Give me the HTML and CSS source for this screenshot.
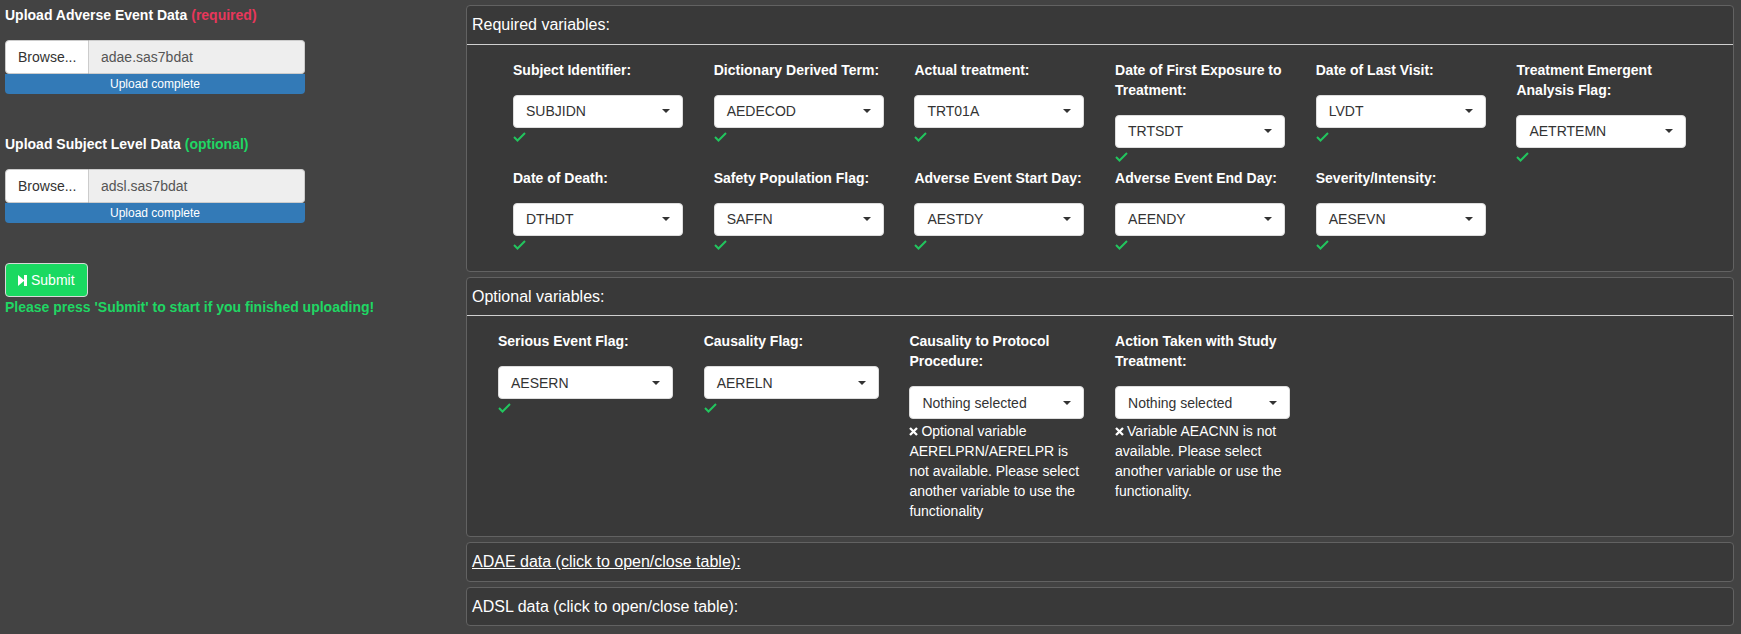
FILE: index.html
```html
<!DOCTYPE html>
<html lang="en">
<head>
<meta charset="utf-8">
<title>Adverse Events Upload</title>
<link rel="stylesheet" href="styles.css">
</head>
<body>
<div class="layout">
  <aside class="sidebar">
    <div class="upload">
      <div class="upload-label">Upload Adverse Event Data <span class="req">(required)</span></div>
      <div class="file-input">
        <span class="browse">Browse...</span>
        <span class="file-name">adae.sas7bdat</span>
      </div>
      <div class="progress">Upload complete</div>
    </div>
    <div class="upload">
      <div class="upload-label">Upload Subject Level Data <span class="opt">(optional)</span></div>
      <div class="file-input">
        <span class="browse">Browse...</span>
        <span class="file-name">adsl.sas7bdat</span>
      </div>
      <div class="progress">Upload complete</div>
    </div>
    <button class="submit" type="button">
      <svg class="step-icon" width="9" height="11" viewBox="0 0 9 11"><polygon points="0,0 6.5,5.5 0,11" fill="#fff"/><rect x="6" y="0" width="3" height="11" fill="#fff"/></svg>
      Submit
    </button>
    <div class="hint">Please press 'Submit' to start if you finished uploading!</div>
  </aside>

  <main class="main">
    <section class="panel">
      <div class="panel-heading lined">Required variables:</div>
      <div class="panel-body req-body">
        <div class="field">
          <div class="field-label">Subject Identifier:</div>
          <div class="select"><span>SUBJIDN</span><i class="caret"></i></div>
          <div class="status"><svg class="check" width="13" height="10" viewBox="0 0 13 10"><polyline points="1,5 4.5,8.5 12,1" fill="none" stroke="#22c55e" stroke-width="2"/></svg></div>
        </div>
        <div class="field">
          <div class="field-label">Dictionary Derived Term:</div>
          <div class="select"><span>AEDECOD</span><i class="caret"></i></div>
          <div class="status"><svg class="check" width="13" height="10" viewBox="0 0 13 10"><polyline points="1,5 4.5,8.5 12,1" fill="none" stroke="#22c55e" stroke-width="2"/></svg></div>
        </div>
        <div class="field">
          <div class="field-label">Actual treatment:</div>
          <div class="select"><span>TRT01A</span><i class="caret"></i></div>
          <div class="status"><svg class="check" width="13" height="10" viewBox="0 0 13 10"><polyline points="1,5 4.5,8.5 12,1" fill="none" stroke="#22c55e" stroke-width="2"/></svg></div>
        </div>
        <div class="field">
          <div class="field-label">Date of First Exposure to Treatment:</div>
          <div class="select"><span>TRTSDT</span><i class="caret"></i></div>
          <div class="status"><svg class="check" width="13" height="10" viewBox="0 0 13 10"><polyline points="1,5 4.5,8.5 12,1" fill="none" stroke="#22c55e" stroke-width="2"/></svg></div>
        </div>
        <div class="field">
          <div class="field-label">Date of Last Visit:</div>
          <div class="select"><span>LVDT</span><i class="caret"></i></div>
          <div class="status"><svg class="check" width="13" height="10" viewBox="0 0 13 10"><polyline points="1,5 4.5,8.5 12,1" fill="none" stroke="#22c55e" stroke-width="2"/></svg></div>
        </div>
        <div class="field">
          <div class="field-label">Treatment Emergent Analysis Flag:</div>
          <div class="select"><span>AETRTEMN</span><i class="caret"></i></div>
          <div class="status"><svg class="check" width="13" height="10" viewBox="0 0 13 10"><polyline points="1,5 4.5,8.5 12,1" fill="none" stroke="#22c55e" stroke-width="2"/></svg></div>
        </div>
        <div class="field">
          <div class="field-label">Date of Death:</div>
          <div class="select"><span>DTHDT</span><i class="caret"></i></div>
          <div class="status"><svg class="check" width="13" height="10" viewBox="0 0 13 10"><polyline points="1,5 4.5,8.5 12,1" fill="none" stroke="#22c55e" stroke-width="2"/></svg></div>
        </div>
        <div class="field">
          <div class="field-label">Safety Population Flag:</div>
          <div class="select"><span>SAFFN</span><i class="caret"></i></div>
          <div class="status"><svg class="check" width="13" height="10" viewBox="0 0 13 10"><polyline points="1,5 4.5,8.5 12,1" fill="none" stroke="#22c55e" stroke-width="2"/></svg></div>
        </div>
        <div class="field">
          <div class="field-label">Adverse Event Start Day:</div>
          <div class="select"><span>AESTDY</span><i class="caret"></i></div>
          <div class="status"><svg class="check" width="13" height="10" viewBox="0 0 13 10"><polyline points="1,5 4.5,8.5 12,1" fill="none" stroke="#22c55e" stroke-width="2"/></svg></div>
        </div>
        <div class="field">
          <div class="field-label">Adverse Event End Day:</div>
          <div class="select"><span>AEENDY</span><i class="caret"></i></div>
          <div class="status"><svg class="check" width="13" height="10" viewBox="0 0 13 10"><polyline points="1,5 4.5,8.5 12,1" fill="none" stroke="#22c55e" stroke-width="2"/></svg></div>
        </div>
        <div class="field">
          <div class="field-label">Severity/Intensity:</div>
          <div class="select"><span>AESEVN</span><i class="caret"></i></div>
          <div class="status"><svg class="check" width="13" height="10" viewBox="0 0 13 10"><polyline points="1,5 4.5,8.5 12,1" fill="none" stroke="#22c55e" stroke-width="2"/></svg></div>
        </div>
      </div>
    </section>

    <section class="panel">
      <div class="panel-heading lined">Optional variables:</div>
      <div class="panel-body opt-body">
        <div class="field wide">
          <div class="field-label">Serious Event Flag:</div>
          <div class="select"><span>AESERN</span><i class="caret"></i></div>
          <div class="status"><svg class="check" width="13" height="10" viewBox="0 0 13 10"><polyline points="1,5 4.5,8.5 12,1" fill="none" stroke="#22c55e" stroke-width="2"/></svg></div>
        </div>
        <div class="field wide">
          <div class="field-label">Causality Flag:</div>
          <div class="select"><span>AERELN</span><i class="caret"></i></div>
          <div class="status"><svg class="check" width="13" height="10" viewBox="0 0 13 10"><polyline points="1,5 4.5,8.5 12,1" fill="none" stroke="#22c55e" stroke-width="2"/></svg></div>
        </div>
        <div class="field wide">
          <div class="field-label">Causality to Protocol Procedure:</div>
          <div class="select"><span>Nothing selected</span><i class="caret"></i></div>
          <div class="error"><svg class="cross" width="9" height="9" viewBox="0 0 9 9"><path d="M1 1 L8 8 M8 1 L1 8" stroke="#fff" stroke-width="2.3"/></svg>Optional variable AERELPRN/AERELPR is not available. Please select another variable to use the functionality</div>
        </div>
        <div class="field wide">
          <div class="field-label">Action Taken with Study Treatment:</div>
          <div class="select"><span>Nothing selected</span><i class="caret"></i></div>
          <div class="error"><svg class="cross" width="9" height="9" viewBox="0 0 9 9"><path d="M1 1 L8 8 M8 1 L1 8" stroke="#fff" stroke-width="2.3"/></svg>Variable AEACNN is not available. Please select another variable or use the functionality.</div>
        </div>
      </div>
    </section>

    <section class="panel">
      <div class="panel-heading"><a class="toggle" href="#">ADAE data (click to open/close table):</a></div>
    </section>

    <section class="panel">
      <div class="panel-heading">ADSL data (click to open/close table):</div>
    </section>
  </main>
</div>
</body>
</html>
```

FILE: styles.css
```css
html, body {
  margin: 0;
  padding: 0;
}

body {
  background: #434343;
  color: #fff;
  font-family: "Liberation Sans", Arial, Helvetica, sans-serif;
  font-size: 14px;
  line-height: 20px;
}

.layout {
  display: flex;
  align-items: flex-start;
}

/* ---------- sidebar ---------- */
.sidebar {
  width: 461px;
  flex: none;
  padding: 5px 0 0 5px;
}

.upload {
  margin-bottom: 40px;
}

.upload-label {
  font-weight: bold;
  margin-bottom: 15px;
}

.req { color: #e8375b; }
.opt { color: #1fd763; }

.file-input {
  display: flex;
  width: 300px;
  height: 34px;
  box-sizing: border-box;
}

.browse {
  box-sizing: border-box;
  width: 84px;
  padding: 6px 12px;
  background: #fff;
  color: #333;
  border: 1px solid #ccc;
  border-radius: 4px 0 0 4px;
}

.file-name {
  flex: 1;
  padding: 6px 12px;
  background: #eee;
  color: #555;
  border: 1px solid #ccc;
  border-left: none;
  border-radius: 0 4px 4px 0;
}

.progress {
  width: 300px;
  height: 20px;
  background: #337ab7;
  border-radius: 0 0 4px 4px;
  color: #fff;
  font-size: 12px;
  line-height: 20px;
  text-align: center;
}

.submit {
  display: flex;
  align-items: center;
  gap: 4px;
  height: 34px;
  box-sizing: border-box;
  padding: 6px 12px;
  background: #1ad961;
  color: #fff;
  border: 1px solid #d8d8d8;
  border-radius: 4px;
  font: inherit;
  margin: 0;
}

.step-icon { display: block; }

.hint {
  color: #1fd763;
  font-weight: bold;
}

/* ---------- main ---------- */
.main {
  flex: 1;
  min-width: 0;
  padding: 5px 7px 0 0;
  display: flex;
  flex-direction: column;
  gap: 5px;
}

.panel {
  background: #393939;
  border: 1px solid #626262;
  border-radius: 4px;
}

.panel-heading {
  padding: 10px 5px;
  font-size: 16px;
  line-height: 17.6px;
}

.panel-heading.lined {
  border-bottom: 1px solid #cfcfcf;
}

.toggle {
  color: #fff;
  text-decoration: underline;
}

.panel-body {
  display: flex;
  flex-wrap: wrap;
  column-gap: 30.7px;
  padding-top: 15px;
  padding-bottom: 15px;
  padding-right: 15px;
}

.req-body { padding-left: 46px; }
.opt-body { padding-left: 31px; }

.field {
  width: 170px;
}

.field.wide {
  width: 175px;
}

.field-label {
  font-weight: bold;
  margin-bottom: 15px;
}

.select {
  display: flex;
  align-items: center;
  justify-content: space-between;
  height: 33px;
  box-sizing: border-box;
  padding: 0 12px;
  background: #fff;
  color: #333;
  border: 1px solid #ddd;
  border-radius: 4px;
}

.caret {
  width: 0;
  height: 0;
  border-top: 4px solid #333;
  border-left: 4px solid transparent;
  border-right: 4px solid transparent;
}

.status {
  height: 20px;
  padding-top: 4px;
  box-sizing: border-box;
}

.check { display: block; }

.error {
  margin-top: 2px;
}

.cross {
  display: inline-block;
  margin-right: 3px;
  vertical-align: 0;
}
```
